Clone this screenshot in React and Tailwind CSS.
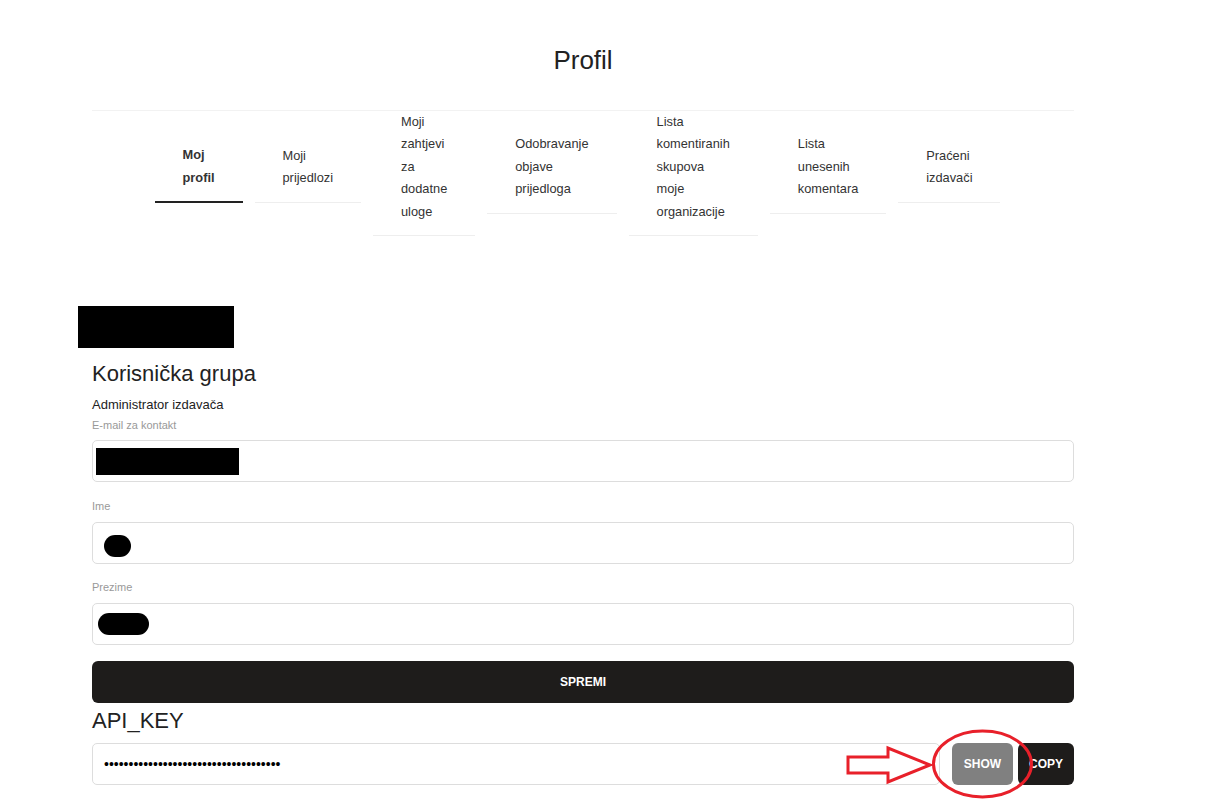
import { useState } from "react";

const tabs = [
  { label: "Moj profil", active: true },
  { label: "Moji prijedlozi" },
  { label: "Moji zahtjevi za dodatne uloge" },
  { label: "Odobravanje objave prijedloga" },
  { label: "Lista komentiranih skupova moje organizacije" },
  { label: "Lista unesenih komentara" },
  { label: "Praćeni izdavači" },
];

const labelStyle = "block text-[11px] leading-[14px] text-[#999]";
const fieldStyle = "relative h-[42px] w-full rounded-[5px] border border-[#ddd] bg-white";

export default function App() {
  const [showKey, setShowKey] = useState(false);
  const apiKey = "a3f9c2e7b1d84f6a9e0c5b2d7f1a4e8c3b6d";

  return (
    <div className="relative min-h-[800px] w-full bg-white pt-[45px] font-['Liberation_Sans',Arial,sans-serif] text-[#222]">
      <div className="ml-[92px] w-[982px]">
        <h1 className="text-center text-[26px] leading-[30px] text-[#222]">Profil</h1>

        {/* tabs */}
        <div className="mt-[35px] border-t border-[#f2f2f2]">
          <nav className="flex h-[125px] items-center justify-center pr-[11px]">
            {tabs.map((t) => (
              <div
                key={t.label}
                className={
                  "mx-[6px] w-min px-[28px] pb-[12px] text-[12.8px] leading-[22.5px] text-[#333] " +
                  (t.active ? "border-b-2 border-[#222] font-bold" : "border-b border-[#eee]")
                }
              >
                {t.label}
              </div>
            ))}
          </nav>
        </div>

        {/* avatar / name block (redacted) */}
        <div className="-ml-[14px] mt-[70px] h-[42px] w-[156px] bg-black" />

        <h2 className="mt-[13px] text-[22px] leading-[26px] text-[#222]">Korisnička grupa</h2>
        <p className="mt-[9px] text-[13px] leading-[18px] text-[#222]">Administrator izdavača</p>

        <label className={labelStyle + " mt-[4px]"}>E-mail za kontakt</label>
        <div className={fieldStyle + " mt-[8px]"}>
          <div className="absolute left-[3px] top-[7px] h-[27px] w-[143px] bg-black" />
        </div>

        <label className={labelStyle + " mt-[17px]"}>Ime</label>
        <div className={fieldStyle + " mt-[9px]"}>
          <div className="absolute left-[11px] top-[12px] h-[22px] w-[27px] rounded-full bg-black" />
        </div>

        <label className={labelStyle + " mt-[16px]"}>Prezime</label>
        <div className={fieldStyle + " mt-[9px]"}>
          <div className="absolute left-[5px] top-[9px] h-[22px] w-[51px] rounded-full bg-black" />
        </div>

        <button className="mt-[16px] h-[42px] w-full rounded-[6px] bg-[#1e1c1b] text-[12px] font-bold text-white">
          SPREMI
        </button>

        <h2 className="mt-[5px] text-[22px] leading-[26px] text-[#222]">API_KEY</h2>
        <div className="mt-[9px] flex h-[42px] items-stretch">
          <input
            readOnly
            type={showKey ? "text" : "password"}
            value={apiKey}
            className="mr-[12px] min-w-0 flex-1 rounded-[5px] border border-[#ddd] px-[11px] text-[14px] text-black outline-none"
          />
          <button
            onClick={() => setShowKey(!showKey)}
            className="w-[61px] rounded-[6px] bg-[#808080] text-[12px] font-bold text-white"
          >
            SHOW
          </button>
          <button className="ml-[5px] w-[56px] rounded-[6px] bg-[#1e1c1b] text-[12px] font-bold text-white">
            COPY
          </button>
        </div>
      </div>

      {/* red hint arrow + circle around the show button */}
      <svg
        className="pointer-events-none absolute left-[840px] top-[725px]"
        width="200"
        height="76"
        viewBox="0 0 200 76"
        fill="none"
        stroke="#e8202a"
        strokeWidth="3"
      >
        <path d="M8 32 H48 V23 L90 40 L48 57 V48 H8 Z" strokeLinejoin="miter" />
        <ellipse cx="142.5" cy="39" rx="49" ry="33" />
      </svg>
    </div>
  );
}
